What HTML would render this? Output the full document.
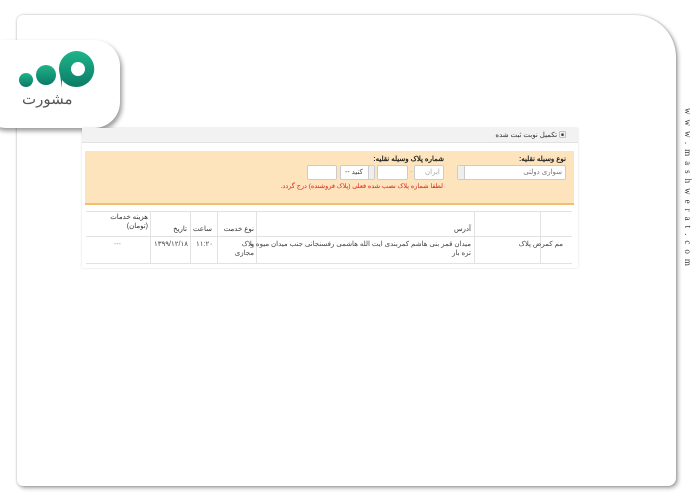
<!DOCTYPE html>
<html><head><meta charset="utf-8"><style>
*{margin:0;padding:0;box-sizing:border-box}
body{width:700px;height:500px;background:#fff;position:relative;overflow:hidden;font-family:"Liberation Sans","Noto Sans CJK SC",sans-serif;}
.card{position:absolute;left:17px;top:15px;width:659px;height:471px;background:#fff;border-radius:6px 42px 8px 6px;box-shadow:2px 2px 4px rgba(0,0,0,.35),0 0 2px rgba(0,0,0,.25);}
.logo{position:absolute;left:-20px;top:40px;width:140px;height:88px;background:#fff;border-radius:26px;box-shadow:2px 3px 5px rgba(0,0,0,.4);}
.a{position:absolute;direction:rtl;white-space:nowrap;color:#444;font-size:7px;line-height:9px}
.box{position:absolute;background:#fff;border:1px solid #ccc;border-radius:2px}
.b{font-weight:bold;color:#222}
.vl{position:absolute;background:#e2e2e2;width:1px}
.hl{position:absolute;background:#e2e2e2;height:1px}
</style></head><body>
<div class="card"></div>
<div class="logo"></div>
<svg style="position:absolute;left:0;top:40px" width="120" height="88">
<defs><linearGradient id="g" x1="0" y1="0" x2="0" y2="1"><stop offset="0" stop-color="#1fb489"/><stop offset="1" stop-color="#0a7a66"/></linearGradient></defs>
<circle cx="26" cy="40" r="7" fill="url(#g)"/>
<circle cx="46" cy="35" r="10" fill="url(#g)"/>
<path d="M77 11a18 18 0 1 1 -15 29v8l-2 -13a18 18 0 0 1 17 -24z" fill="url(#g)"/>
<circle cx="78" cy="29" r="7" fill="#fff"/>
</svg>
<div class="a" style="left:22px;top:91px;font-size:15px;line-height:18px;color:#555;direction:rtl">مشورت</div>
<div class="a" style="left:680px;top:108px;transform-origin:0 0;transform:translateX(12px) rotate(90deg);font-family:'Liberation Serif',serif;font-size:9px;letter-spacing:5px;color:#333;direction:ltr">www.mashwerat.com</div>

<div style="position:absolute;left:82px;top:128px;width:496px;height:140px;background:#fff;box-shadow:0 0 2px rgba(0,0,0,.15)"></div>
<div style="position:absolute;left:82px;top:128px;width:496px;height:15px;background:#f2f2f2;border-bottom:1px solid #e2e2e2"></div>
<div class="a" style="right:134px;top:131px;color:#333">▣ تکمیل نوبت ثبت شده</div>
<div style="position:absolute;left:85px;top:151px;width:489px;height:54px;background:#fde4bd;border-bottom:2px solid #f0c070"></div>
<div class="a b" style="right:134px;top:155px">نوع وسیله نقلیه:</div>
<div class="box" style="left:457px;top:165px;width:109px;height:15px"></div>
<div class="a" style="right:138px;top:168px;color:#777">سواری دولتی</div>
<div style="position:absolute;left:458px;top:166px;width:7px;height:13px;border-right:1px solid #ccc;background:#eee"></div>
<div class="a b" style="right:256px;top:155px">شماره پلاک وسیله نقلیه:</div>
<div class="box" style="left:414px;top:165px;width:30px;height:15px"></div>
<div class="a" style="left:425px;top:168px;color:#aaa">ایران</div>
<div class="a" style="left:410px;top:168px;color:#aaa">-</div>
<div class="box" style="left:377px;top:165px;width:31px;height:15px"></div>
<div class="box" style="left:340px;top:165px;width:35px;height:15px"></div>
<div class="a" style="left:345px;top:168px">كنيد --</div>
<div style="position:absolute;left:368px;top:166px;width:6px;height:13px;border-left:1px solid #ccc;background:#eee"></div>
<div class="box" style="left:307px;top:165px;width:30px;height:15px"></div>
<div class="a" style="right:257px;top:182px;color:#d22;font-size:6.5px">لطفا شماره پلاک نصب شده فعلی (پلاک فروشنده) درج گردد.</div>

<div class="hl" style="left:86px;top:211px;width:486px"></div>
<div class="hl" style="left:86px;top:236px;width:486px"></div>
<div class="hl" style="left:86px;top:263px;width:486px"></div>
<div class="vl" style="left:150px;top:211px;height:52px"></div>
<div class="vl" style="left:190px;top:211px;height:52px"></div>
<div class="vl" style="left:217px;top:211px;height:52px"></div>
<div class="vl" style="left:256px;top:211px;height:52px"></div>
<div class="vl" style="left:474px;top:211px;height:52px"></div>
<div class="vl" style="left:540px;top:211px;height:52px"></div>
<div class="a" style="right:552px;top:213px;color:#333">هزینه خدمات<br>(تومان)</div>
<div class="a" style="right:513px;top:225px;color:#333">تاریخ</div>
<div class="a" style="right:488px;top:225px;color:#333">ساعت</div>
<div class="a" style="right:446px;top:225px;color:#333">نوع خدمت</div>
<div class="a" style="right:229px;top:225px;color:#333">آدرس</div>
<div class="a" style="left:114px;top:240px;color:#999">---</div>
<div class="a" style="left:154px;top:240px">۱۳۹۹/۱۲/۱۸</div>
<div class="a" style="left:196px;top:240px">۱۱:۲۰</div>
<div class="a" style="right:446px;top:240px">پلاک<br>مجازی</div>
<div class="a" style="right:229px;top:240px">میدان قمر بنی هاشم کمربندی ایت الله هاشمی رفسنجانی جنب میدان میوه و<br>تره بار</div>
<div class="a" style="right:137px;top:240px">مم کمرض پلاک</div>
</body></html>
